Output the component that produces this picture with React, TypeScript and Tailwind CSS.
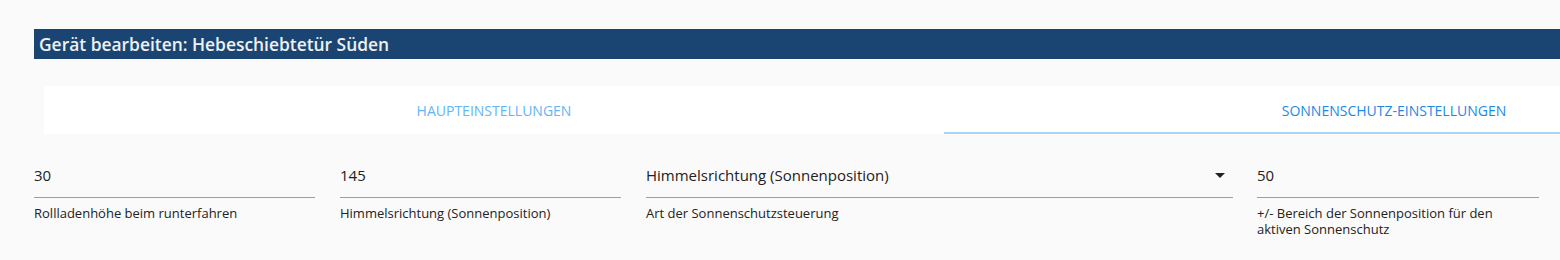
import React from "react";

function Field({ value, label, select, className }: { value: string; label: React.ReactNode; select?: boolean; className: string }) {
  return (
    <div className={className}>
      <div className="flex h-[58px] items-end border-b border-[#9e9e9e] pb-[12px]">
        <span className="flex-1 text-[15px] leading-[20px] text-[#222]">{value}</span>
        {select && (
          <svg width="10" height="5" viewBox="0 0 10 5" className="mr-[8px] mb-[7px]">
            <path d="M0 0 L10 0 L5 5 Z" fill="#222" />
          </svg>
        )}
      </div>
      <div className="pt-[7px] text-[13px] leading-[16px] text-[#222]">{label}</div>
    </div>
  );
}

export default function App() {
  return (
    <div className="h-[260px] w-[1560px] overflow-hidden bg-[#fafafa] font-['Open_Sans','Noto_Sans',sans-serif]">
      <div className="pt-[29px] pl-[34px]">
        <div className="flex h-[30px] items-center bg-[#1a4573] pl-[5px] text-[17.4px] font-semibold text-[#f0f0f0]">
          Gerät bearbeiten: Hebeschiebtetür Süden
        </div>
      </div>
      <div className="mt-[27px] ml-[44px] flex h-[48px] w-[1800px] bg-white text-[14px]">
        <div className="flex w-[900px] items-center justify-center text-[#64b5f6]">HAUPTEINSTELLUNGEN</div>
        <div className="flex w-[900px] flex-col">
          <div className="flex flex-1 items-center justify-center pt-[2px] text-[#1e88e5]">SONNENSCHUTZ-EINSTELLUNGEN</div>
          <div className="h-[2px] bg-[#a8d4f6]" />
        </div>
      </div>
      <div className="mt-[6px] ml-[34px] flex gap-[25px]">
        <Field className="w-[281px]" value="30" label="Rollladenhöhe beim runterfahren" />
        <Field className="w-[281px]" value="145" label="Himmelsrichtung (Sonnenposition)" />
        <Field className="w-[587px]" value="Himmelsrichtung (Sonnenposition)" label="Art der Sonnenschutzsteuerung" select />
        <Field
          className="ml-[-1px] w-[282px]"
          value="50"
          label={
            <>
              +/- Bereich der Sonnenposition für den
              <br />
              aktiven Sonnenschutz
            </>
          }
        />
      </div>
    </div>
  );
}
